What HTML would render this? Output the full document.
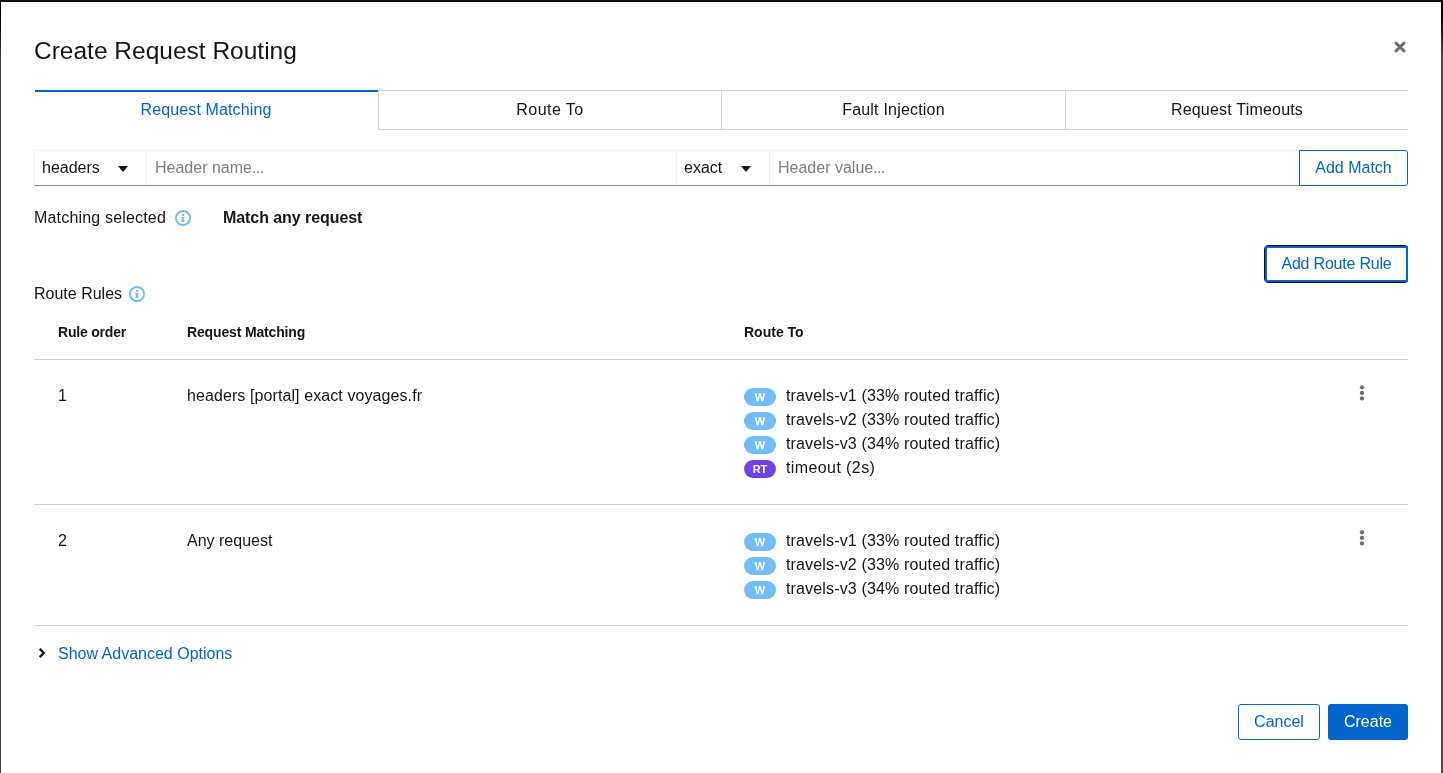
<!DOCTYPE html>
<html><head><meta charset="utf-8">
<style>
html,body{margin:0;padding:0;}
body{width:1443px;height:773px;overflow:hidden;background:#0a0a0a;position:relative;font-family:"Liberation Sans",sans-serif;color:#151515;}
#shade{position:absolute;left:0;top:0;width:1443px;height:773px;background:linear-gradient(#000 0px,#0a0a0a 60px,#3c3c3c 300px,#3c3c3c 773px);}
#modal{position:absolute;left:1px;top:2px;width:1440px;height:771px;background:#fff;}
.t{position:absolute;white-space:nowrap;line-height:20px;}
.s16{font-size:16px;}
.s14{font-size:14px;}
.blue{color:#06c;}
.hline{position:absolute;height:1px;background:#d2d2d2;}
.tab{position:absolute;top:90px;height:40px;box-sizing:border-box;border:1px solid #d2d2d2;border-right:none;text-align:center;font-size:16px;line-height:38px;}
.box{position:absolute;top:150px;height:36px;box-sizing:border-box;border:1px solid #f0f0f0;border-bottom:1px solid #8a8d90;}
.badge{position:absolute;left:744px;width:32px;height:18px;border-radius:9px;background:#73bcf7;color:#fff;font-size:11px;font-weight:bold;text-align:center;line-height:18px;}
.badge.rt{background:#6f41e8;}
.btn{position:absolute;box-sizing:border-box;border-radius:3px;font-size:16px;text-align:center;}
</style></head>
<body>
<div style="position:absolute;left:0;top:1px;width:1442px;height:1px;background:#000"></div>
<div style="position:absolute;left:0;top:1px;width:1px;height:772px;background:linear-gradient(#000 0px,#000 14px,#3a3b3e 55px)"></div>
<div style="position:absolute;left:1441px;top:1px;width:2px;height:772px;background:linear-gradient(#000 0px,#000 14px,#4a4a4a 55px)"></div>
<div id="modal"></div>
<div style="position:absolute;left:0;top:0;width:1443px;height:773px;will-change:transform">

<!-- title -->
<div class="t" style="left:34px;top:36px;font-size:24.5px;line-height:30px;">Create Request Routing</div>
<svg style="position:absolute;left:1394px;top:41px" width="12" height="12" viewBox="0 0 12 12"><path d="M2 2L10 10M10 2L2 10" stroke="#6a6e73" stroke-width="2.9" stroke-linecap="round"/></svg>

<!-- tabs -->
<div style="position:absolute;left:35px;top:90px;width:343px;height:2px;background:#06c"></div>
<div class="t s16 blue" style="left:34px;width:344px;text-align:center;top:100px;letter-spacing:0.13px;">Request Matching</div>
<div class="tab" style="left:378px;width:343px;border-left:1px solid #d2d2d2;letter-spacing:0.45px;">Route To</div>
<div class="tab" style="left:721px;width:344px;border-left:1px solid #d2d2d2;letter-spacing:0.2px;">Fault Injection</div>
<div class="tab" style="left:1065px;width:343px;border-left:1px solid #d2d2d2;letter-spacing:0.2px;">Request Timeouts</div>

<!-- match input row -->
<div class="box" style="left:34px;width:113px;"></div>
<div class="t s16" style="left:42px;top:158px;">headers</div>
<svg style="position:absolute;left:118px;top:166px" width="10" height="6" viewBox="0 0 10 6"><path d="M0 0H10L5 6Z" fill="#151515"/></svg>
<div class="box" style="left:146px;width:531px;border-left:none;"></div>
<div class="t s16" style="left:155px;top:158px;color:#7b7e82;">Header name<span style="letter-spacing:-0.6px">...</span></div>
<div class="box" style="left:676px;width:94px;"></div>
<div class="t s16" style="left:684px;top:158px;">exact</div>
<svg style="position:absolute;left:741px;top:166px" width="10" height="6" viewBox="0 0 10 6"><path d="M0 0H10L5 6Z" fill="#151515"/></svg>
<div class="box" style="left:769px;width:531px;border-left:none;"></div>
<div class="t s16" style="left:778px;top:158px;color:#7b7e82;">Header value<span style="letter-spacing:-0.6px">...</span></div>
<div class="btn blue" style="left:1299px;top:150px;width:109px;height:36px;border:1px solid #06c;line-height:34px;border-radius:0 3px 3px 0;">Add Match</div>

<!-- matching selected -->
<div class="t s16" style="left:34px;top:208px;letter-spacing:0.18px;">Matching selected</div>
<svg style="position:absolute;left:175px;top:210px" width="16" height="16" viewBox="0 0 16 16"><circle cx="8" cy="8" r="7.05" fill="none" stroke="#73bcf7" stroke-width="1.9"/><rect x="6.9" y="3.9" width="2.3" height="2" rx="0.4" fill="#73bcf7"/><path d="M6.2 7H9.2V11H9.8V12.1H6.2V11H6.9V8.1H6.2Z" fill="#73bcf7"/></svg>
<div class="t s16" style="left:223px;top:208px;font-weight:bold;letter-spacing:-0.07px;">Match any request</div>

<!-- add route rule -->
<div style="position:absolute;left:1264px;top:245px;width:144px;height:38px;overflow:hidden;"><div style="position:absolute;left:0;top:0;width:145px;height:38px;box-sizing:border-box;border:1px solid #000;border-radius:4px;"></div></div>
<div class="btn blue" style="left:1265px;top:246px;width:143px;height:36px;border:2px solid #06c;line-height:32px;letter-spacing:-0.2px;">Add Route Rule</div>

<!-- route rules -->
<div class="t s16" style="left:34px;top:284px;">Route Rules</div>
<svg style="position:absolute;left:129px;top:286px" width="16" height="16" viewBox="0 0 16 16"><circle cx="8" cy="8" r="7.05" fill="none" stroke="#73bcf7" stroke-width="1.9"/><rect x="6.9" y="3.9" width="2.3" height="2" rx="0.4" fill="#73bcf7"/><path d="M6.2 7H9.2V11H9.8V12.1H6.2V11H6.9V8.1H6.2Z" fill="#73bcf7"/></svg>

<!-- table header -->
<div class="t s14" style="left:58px;top:322px;font-weight:bold;letter-spacing:-0.2px;">Rule order</div>
<div class="t s14" style="left:187px;top:322px;font-weight:bold;letter-spacing:-0.15px;">Request Matching</div>
<div class="t s14" style="left:744px;top:322px;font-weight:bold;">Route To</div>
<div class="hline" style="left:34px;top:359px;width:1374px;"></div>

<!-- row 1 -->
<div class="t s16" style="left:58px;top:386px;">1</div>
<div class="t s16" style="left:187px;top:386px;letter-spacing:0.09px;">headers [portal] exact voyages.fr</div>
<div class="badge" style="top:388px;">W</div>
<div class="t s16" style="left:786px;top:386px;letter-spacing:0.15px;">travels-v1 (33% routed traffic)</div>
<div class="badge" style="top:412px;">W</div>
<div class="t s16" style="left:786px;top:410px;letter-spacing:0.15px;">travels-v2 (33% routed traffic)</div>
<div class="badge" style="top:436px;">W</div>
<div class="t s16" style="left:786px;top:434px;letter-spacing:0.15px;">travels-v3 (34% routed traffic)</div>
<div class="badge rt" style="top:460px;">RT</div>
<div class="t s16" style="left:786px;top:458px;letter-spacing:0.4px;">timeout (2s)</div>
<svg style="position:absolute;left:1358px;top:384px" width="8" height="18" viewBox="0 0 8 18"><circle cx="4" cy="3.3" r="2.15" fill="#6a6e73"/><circle cx="4" cy="8.9" r="2.15" fill="#6a6e73"/><circle cx="4" cy="14.4" r="2.15" fill="#6a6e73"/></svg>
<div class="hline" style="left:34px;top:504px;width:1374px;"></div>

<!-- row 2 -->
<div class="t s16" style="left:58px;top:531px;">2</div>
<div class="t s16" style="left:187px;top:531px;">Any request</div>
<div class="badge" style="top:533px;">W</div>
<div class="t s16" style="left:786px;top:531px;letter-spacing:0.15px;">travels-v1 (33% routed traffic)</div>
<div class="badge" style="top:557px;">W</div>
<div class="t s16" style="left:786px;top:555px;letter-spacing:0.15px;">travels-v2 (33% routed traffic)</div>
<div class="badge" style="top:581px;">W</div>
<div class="t s16" style="left:786px;top:579px;letter-spacing:0.15px;">travels-v3 (34% routed traffic)</div>
<svg style="position:absolute;left:1358px;top:529px" width="8" height="18" viewBox="0 0 8 18"><circle cx="4" cy="3.3" r="2.15" fill="#6a6e73"/><circle cx="4" cy="8.9" r="2.15" fill="#6a6e73"/><circle cx="4" cy="14.4" r="2.15" fill="#6a6e73"/></svg>
<div class="hline" style="left:34px;top:625px;width:1374px;"></div>

<!-- advanced -->
<svg style="position:absolute;left:37px;top:647px" width="10" height="12" viewBox="0 0 10 12"><path d="M2.7 1.9L6.8 6L2.7 10.1" fill="none" stroke="#151515" stroke-width="2.3"/></svg>
<div class="t s16 blue" style="left:58px;top:644px;">Show Advanced Options</div>

<!-- footer buttons -->
<div class="btn blue" style="left:1238px;top:704px;width:82px;height:36px;border:1px solid #06c;line-height:34px;">Cancel</div>
<div class="btn" style="left:1328px;top:704px;width:80px;height:36px;background:#06c;color:#fff;line-height:36px;">Create</div>
</div>
</body></html>
